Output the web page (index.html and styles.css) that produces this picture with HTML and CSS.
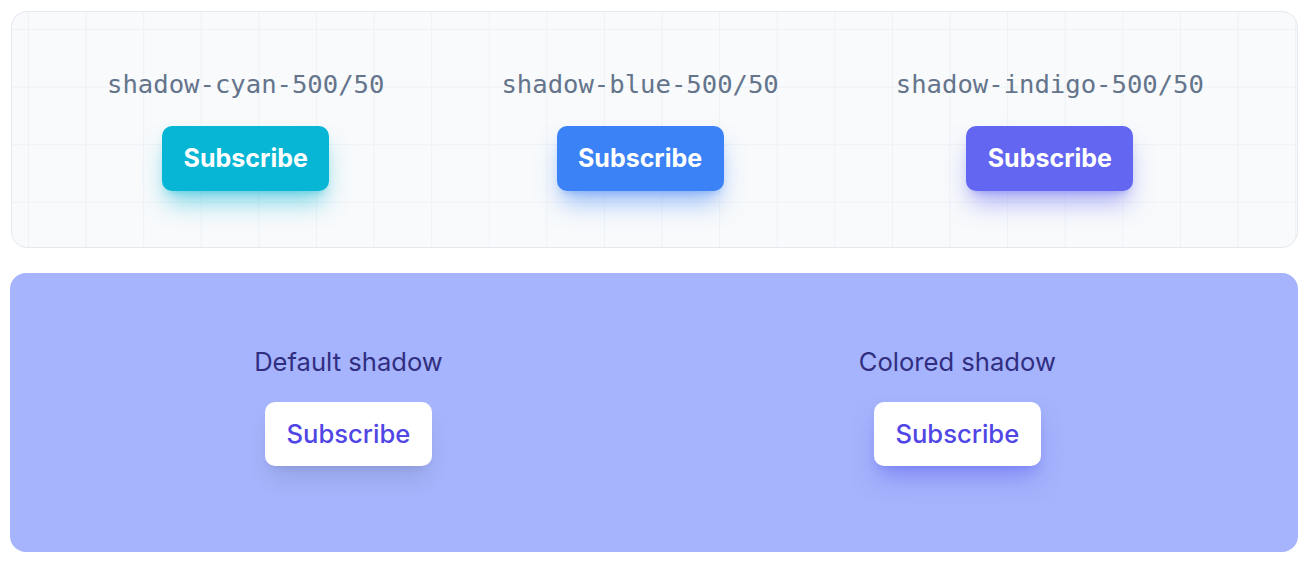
FILE: index.html
```html
<!DOCTYPE html>
<html>
<head>
<meta charset="utf-8">
<link rel="stylesheet" href="styles.css">
</head>
<body>
<div class="page">
  <section class="grid-panel">
    <div class="demo">
      <code class="label">shadow-cyan-500/50</code>
      <button class="btn btn-cyan">Subscribe</button>
    </div>
    <div class="demo">
      <code class="label">shadow-blue-500/50</code>
      <button class="btn btn-blue">Subscribe</button>
    </div>
    <div class="demo">
      <code class="label">shadow-indigo-500/50</code>
      <button class="btn btn-indigo">Subscribe</button>
    </div>
  </section>
  <section class="indigo-panel">
    <div class="demo demo-default">
      <p class="caption">Default shadow</p>
      <button class="btn-white btn-default">Subscribe</button>
    </div>
    <div class="demo demo-colored">
      <p class="caption">Colored shadow</p>
      <button class="btn-white btn-colored">Subscribe</button>
    </div>
  </section>
</div>
</body>
</html>
```

FILE: styles.css
```css
html, body {
  margin: 0;
  padding: 0;
  background: #ffffff;
}

.page {
  padding: 10px;
  display: flex;
  flex-direction: column;
  gap: 25px;
  width: 1288px;
}

.grid-panel {
  margin: 1px 0 0 1px;
  border: 1px solid #e5e9ef;
  border-radius: 16px;
  background-color: #f8fafc;
  background-image:
    linear-gradient(to right, #eef2f6 1px, transparent 1px),
    linear-gradient(to bottom, #eef2f6 1px, transparent 1px);
  background-size: 57.6px 57.6px;
  background-position: 16px 17px;
  padding: 53px 0 56px 2px;
  display: flex;
  justify-content: center;
  gap: 117px;
}

.demo {
  display: flex;
  flex-direction: column;
  align-items: center;
}

.label {
  font-family: "DejaVu Sans Mono", monospace;
  font-size: 25.6px;
  line-height: 38px;
  color: #64748b;
  margin-bottom: 23px;
}

.btn {
  border: 0;
  border-radius: 10px;
  font-family: Inter, "Liberation Sans", sans-serif;
  font-weight: 700;
  font-size: 25px;
  line-height: 38px;
  color: #ffffff;
  padding: 0 0 2px;
  width: 167px;
  height: 65px;
}

.btn-cyan {
  background: #06b6d4;
  box-shadow: 0 16px 24px -5px rgba(6, 182, 212, 0.5), 0 6px 10px -6px rgba(6, 182, 212, 0.5);
}

.btn-blue {
  background: #3b82f6;
  box-shadow: 0 16px 24px -5px rgba(59, 130, 246, 0.5), 0 6px 10px -6px rgba(59, 130, 246, 0.5);
}

.btn-indigo {
  background: #6366f1;
  box-shadow: 0 16px 24px -5px rgba(99, 102, 241, 0.5), 0 6px 10px -6px rgba(99, 102, 241, 0.5);
}

.indigo-panel {
  background: #a5b4fc;
  border-radius: 16px;
  padding: 70px 0 86px 2px;
  display: flex;
  justify-content: center;
  gap: 416px;
}

.caption {
  margin: 0 0 21px;
  font-family: Inter, "Liberation Sans", sans-serif;
  font-size: 25.6px;
  line-height: 38px;
  color: #312e81;
}

.btn-white {
  border: 0;
  border-radius: 10px;
  background: #ffffff;
  font-family: Inter, "Liberation Sans", sans-serif;
  font-weight: 500;
  font-size: 25.6px;
  line-height: 38px;
  color: #4f46e5;
  width: 167px;
  height: 64px;
  padding: 0;
}

.btn-default {
  box-shadow: 0 16px 24px -5px rgba(0, 0, 0, 0.1), 0 6px 10px -6px rgba(0, 0, 0, 0.1);
}

.btn-colored {
  box-shadow: 0 16px 24px -5px rgba(99, 102, 241, 0.5), 0 6px 10px -6px rgba(99, 102, 241, 0.5);
}
```
